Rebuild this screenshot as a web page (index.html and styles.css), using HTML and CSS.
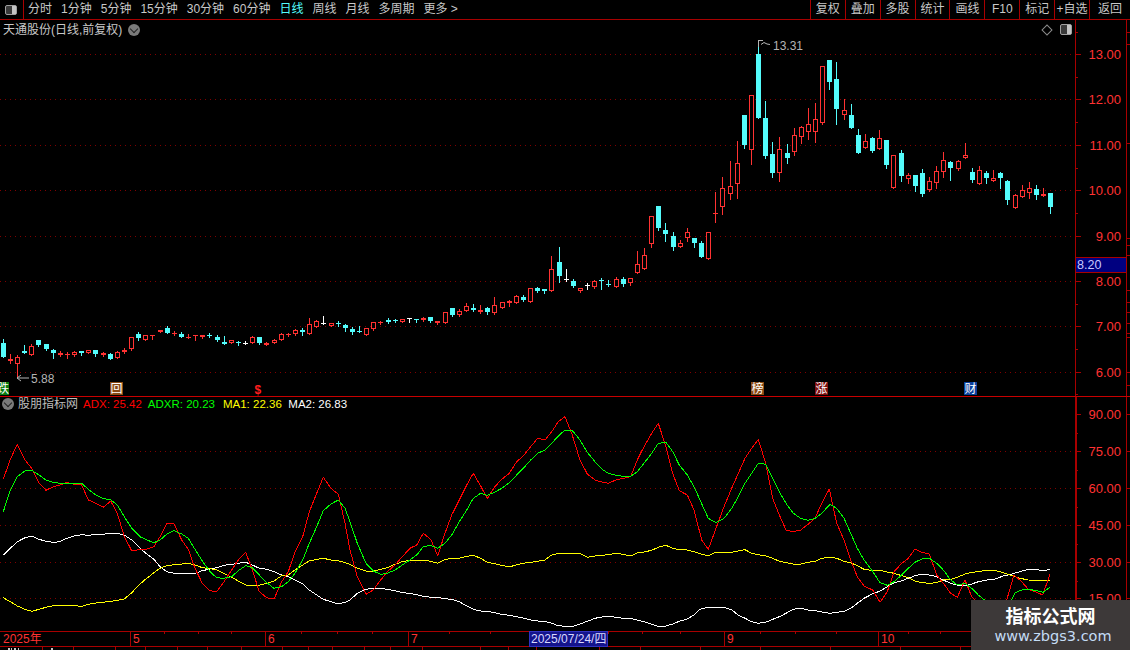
FILE: index.html
```html
<!DOCTYPE html>
<html lang="zh-CN">
<head>
<meta charset="utf-8">
<title>天通股份 日线</title>
<link rel="stylesheet" href="styles.css">
</head>
<body>
<div class="app">
  <header class="toolbar">
    <div class="toggle-cell"><span class="panel-icon"><i></i></span></div>
    <nav class="periods">
      <span>分时</span><span>1分钟</span><span>5分钟</span><span>15分钟</span><span>30分钟</span><span>60分钟</span>
      <span class="active">日线</span><span>周线</span><span>月线</span><span>多周期</span><span>更多 &gt;</span>
    </nav>
    <div class="actions">
      <span>复权</span><span>叠加</span><span>多股</span><span>统计</span><span>画线</span><span>F10</span><span>标记</span><span>+自选</span><span>返回</span>
    </div>
  </header>

  <section class="pane pane-main">
    <div class="plot">
      <svg id="price" class="canvas" width="1075" height="376" viewBox="0 20 1075 376"></svg>
      <div class="caption caption-main">
        <span class="stock-name">天通股份(日线,前复权)</span>
        <span class="round-btn"><i></i></span>
      </div>
      <div class="corner-tools">
        <span class="diamond"></span>
        <span class="panel-icon panel-icon-tall"><i></i></span>
      </div>
    </div>
    <svg id="priceAxis" class="axis" width="52" height="376" viewBox="1075 20 52 376"></svg>
    <svg id="priceStrip" class="strip" width="3" height="376" viewBox="1127 20 3 376"></svg>
  </section>

  <section class="pane pane-ind">
    <div class="plot">
      <svg id="indicator" class="canvas" width="1075" height="234" viewBox="0 397 1075 234"></svg>
      <div class="caption caption-ind">
        <span class="round-btn"><i></i></span>
        <span class="ind-name">股朋指标网</span>
        <span class="v-adx">ADX: 25.42</span>
        <span class="v-adxr">ADXR: 20.23</span>
        <span class="v-ma1">MA1: 22.36</span>
        <span class="v-ma2">MA2: 26.83</span>
      </div>
    </div>
    <svg id="indAxis" class="axis" width="52" height="234" viewBox="1075 397 52 234"></svg>
    <svg id="indStrip" class="strip" width="3" height="234" viewBox="1127 397 3 234"></svg>
  </section>

  <svg id="timeAxis" class="time-axis" width="1130" height="19" viewBox="0 631 1130 19"></svg>

  <aside class="watermark">
    <strong>指标公式网</strong>
    <span>www.zbgs3.com</span>
  </aside>
</div>
<script src="chart.js"></script>
</body>
</html>
```
FILE: styles.css
```css
* { box-sizing: border-box; }
html, body { margin: 0; padding: 0; background: #000; }
body { font-family: "Liberation Sans", "Noto Sans CJK SC", sans-serif; }
.app {
  position: relative;
  width: 1130px;
  height: 650px;
  overflow: hidden;
  background: #000;
  display: flex;
  flex-direction: column;
  color: #c8c8c8;
}

/* toolbar */
.toolbar {
  flex: none;
  height: 20px;
  display: flex;
  align-items: stretch;
  border-bottom: 1px solid #a80000;
  font-size: 12px;
  line-height: 19px;
}
.toggle-cell {
  width: 24px;
  border-right: 1px solid #a80000;
  display: flex;
  align-items: center;
  justify-content: center;
  padding-right: 1px;
}
.panel-icon {
  display: block;
  width: 12px;
  height: 10px;
  border: 1px solid #a0a0a0;
  border-radius: 2px;
  background: #3a3a3a;
  position: relative;
}
.panel-icon-tall { height: 11px; }
.panel-icon i {
  display: block;
  width: 4px;
  height: 100%;
  margin-left: 6px;
  background: #c4c4c4;
}
.periods {
  flex: 1;
  display: flex;
  gap: 9px;
  padding-left: 4px;
}
.periods span { white-space: nowrap; }
.periods .active { color: #54fcfc; }
.actions { display: flex; }
.actions span {
  width: 34.9px;
  text-align: center;
  border-left: 1px solid #a80000;
  white-space: nowrap;
}
.actions span:last-child { width: 41px; }

/* panes */
.pane { flex: none; display: flex; }
.pane-main { height: 377px; border-bottom: 1px solid #c80000; }
.pane-ind { height: 234px; }
.plot { position: relative; width: 1075px; flex: none; }
.canvas, .axis, .strip { display: block; flex: none; }
.caption {
  position: absolute;
  display: flex;
  align-items: center;
  font-size: 12px;
  line-height: 14px;
  white-space: nowrap;
}
.caption-main { left: 3px; top: 3px; gap: 6px; }
.caption-ind { left: 2px; top: 0; }
.round-btn {
  display: block;
  width: 12px;
  height: 12px;
  border-radius: 50%;
  background: #7a7a7a;
  position: relative;
}
.round-btn i {
  position: absolute;
  left: 3px;
  top: 2px;
  width: 6px;
  height: 6px;
  border-right: 1.5px solid #222;
  border-bottom: 1.5px solid #222;
  transform: rotate(45deg);
}
.corner-tools {
  position: absolute;
  right: 3px;
  top: 4px;
  display: flex;
  align-items: center;
  gap: 9px;
}
.diamond {
  display: block;
  width: 8px;
  height: 8px;
  border: 1px solid #8c8c8c;
  transform: rotate(45deg);
}
.ind-name { margin-left: 4px; color: #bdbdbd; }
.v-adx, .v-adxr, .v-ma1, .v-ma2 { font-size: 11.5px; }
.v-adx { margin-left: 5px; color: #ff0000; }
.v-adxr { margin-left: 6px; color: #00ff00; }
.v-ma1 { margin-left: 8px; color: #ffff00; }
.v-ma2 { margin-left: 6.5px; color: #ffffff; }

.time-axis { display: block; flex: none; }

/* svg contents */
svg text { font-family: "Liberation Sans", "Noto Sans CJK SC", sans-serif; }
.grid { stroke: #800000; stroke-width: 1; stroke-dasharray: 1 4; fill: none; shape-rendering: crispEdges; }
.wick-r { stroke: #ff3232; shape-rendering: crispEdges; stroke-width: 1; }
.wick-c { stroke: #54fcfc; shape-rendering: crispEdges; stroke-width: 1; }
.wick-w { stroke: #ffffff; shape-rendering: crispEdges; stroke-width: 1; }
.body-r { fill: #000; stroke: #ff3232; stroke-width: 1; shape-rendering: crispEdges; }
.body-rs { fill: #ff3232; shape-rendering: crispEdges; }
.body-c { fill: #54fcfc; shape-rendering: crispEdges; }
.body-w { fill: #ffffff; shape-rendering: crispEdges; }
.line { fill: none; stroke-width: 1; shape-rendering: crispEdges; stroke-linejoin: round; }
.l-red { stroke: #ff0000; }
.l-green { stroke: #00ff00; }
.l-yellow { stroke: #ffff00; }
.l-white { stroke: #ffffff; }
.note { fill: #b4b4b4; font-size: 12px; }
.note-mark { fill: none; stroke: #b4b4b4; stroke-width: 1; }
.axis-line { stroke: #a80000; stroke-width: 1; shape-rendering: crispEdges; }
.axis-line-wide { stroke: #a80000; stroke-width: 2; shape-rendering: crispEdges; }
.axis-label { fill: #ff3232; font-size: 13px; }
.last-box { fill: #000080; stroke: #a80000; stroke-width: 1; shape-rendering: crispEdges; }
.last-text { fill: #c8c8ff; font-size: 12.5px; }
.tag-text { fill: #fff; font-size: 12px; }
.tag-dollar { fill: #ff1e1e; font-size: 12px; font-weight: bold; }
.tag-green { fill: #0a7d10; }
.tag-brown { fill: #8a4a14; }
.tag-red { fill: #7d1010; }
.tag-blue { fill: #0a3f9c; }
.time-label { fill: #ff3232; font-size: 12px; }
.date-box { fill: #14148c; stroke: #3030c0; shape-rendering: crispEdges; }
.date-text { fill: #d8d8ff; font-size: 12px; }
.tab-bit { fill: #c8c8c8; }

/* watermark */
.watermark {
  position: absolute;
  left: 971px;
  top: 600px;
  width: 159px;
  height: 50px;
  background: #3d3939;
  display: flex;
  flex-direction: column;
  align-items: center;
  padding-top: 5px;
}
.watermark strong {
  font-family: "Noto Sans CJK SC", sans-serif;
  font-size: 18px;
  line-height: 21px;
  font-weight: 700;
  color: #fff;
}
.watermark span {
  margin-top: 1px;
  margin-left: 5px;
  font-family: "DejaVu Sans", sans-serif;
  font-size: 14.5px;
  line-height: 18px;
  color: #c4dcf5;
}
```
FILE: chart.js
```js
// Candles: type (r hollow red, c cyan, w white doji), high, body top, body bottom, low (y in page pixels)
var candles = [
['c',339,343,357,357],['r',354,359,361,363],['r',355,357,364,377],['c',345,351,353,353],['r',344,346,355,355],
['c',340,340,345,346],['c',344,344,349,350],['c',349,350,353,358],['r',351,353,355,356],['r',352,354,355,358],
['r',351,352,355,356],['c',351,351,353,355],['r',350,350,353,353],['c',350,350,354,356],['r',352,353,355,356],
['c',353,354,359,359],['r',351,352,358,358],['r',348,350,352,353],['r',337,337,349,350],['c',332,334,338,340],
['r',335,335,340,340],['r',335,335,336,339],['r',330,330,332,332],['c',326,328,333,333],['r',331,333,334,335],
['c',332,334,337,337],['r',334,337,338,338],['r',335,335,336,340],['r',335,335,337,338],['c',333,335,336,337],
['c',335,337,340,341],['c',336,342,344,344],['r',340,340,343,343],['c',341,342,343,345],['w',341,343,344,344],
['r',336,337,343,343],['c',337,337,343,344],['r',342,343,345,345],['r',339,340,343,343],['r',333,334,340,340],
['r',333,334,335,336],['r',329,330,334,335],['c',328,330,332,335],['r',318,324,334,334],['r',320,321,327,327],
['w',316,323,324,324],['r',323,323,326,326],['c',321,323,324,326],['c',324,325,328,331],['c',327,329,332,334],
['c',326,331,332,332],['r',328,328,335,335],['r',322,322,329,330],['r',321,322,323,324],['c',318,320,322,323],
['c',319,320,321,322],['r',319,319,322,322],['w',318,318,319,322],['c',319,319,320,322],['r',317,318,320,321],
['c',317,317,321,322],['r',321,321,323,324],['r',312,312,323,323],['c',308,308,315,316],['r',309,311,315,316],
['r',303,306,311,311],['c',304,308,310,311],['r',305,310,312,313],['c',307,308,312,314],['r',297,305,313,314],
['r',302,302,308,308],['r',300,301,303,306],['r',295,296,303,303],['c',295,297,300,301],['r',288,288,302,302],
['c',287,288,291,292],['c',289,289,291,293],['r',256,269,291,291],['c',247,262,276,282],['w',269,279,280,281],
['c',279,281,286,287],['r',288,288,291,292],['w',283,285,286,289],['r',280,281,287,288],['c',278,280,281,289],
['c',280,284,285,286],['r',277,279,287,287],['c',277,279,284,286],['r',278,278,283,285],['r',251,264,273,273],
['r',248,255,269,269],['r',216,216,244,247],['c',206,206,228,230],['c',223,230,234,241],['c',232,236,247,250],
['r',240,243,247,247],['r',228,232,238,241],['c',238,238,243,247],['c',241,243,257,257],['r',232,232,259,259],
['r',192,213,214,222],['r',177,188,207,214],['r',161,186,194,199],['r',141,163,184,198],['c',115,115,145,148],
['r',95,95,150,164],['c',40,54,118,118],['c',101,118,156,158],['c',142,154,173,177],['r',137,149,173,181],
['c',144,153,158,163],['r',128,135,152,155],['r',126,127,137,143],['r',108,124,132,139],['r',103,119,132,142],
['r',66,66,123,124],['c',60,60,82,89],['c',62,79,109,124],['r',99,110,115,119],['c',104,115,128,128],
['c',129,135,153,153],['r',134,141,148,148],['c',137,138,151,152],['r',130,138,149,149],['c',140,140,165,168],
['r',155,155,188,188],['c',150,153,176,181],['r',173,175,179,183],['c',175,175,186,191],['c',169,173,194,196],
['r',177,181,190,191],['r',166,171,183,188],['r',152,160,172,177],['c',161,162,168,180],['r',160,161,169,170],
['r',143,155,158,158],['c',168,172,180,182],['r',166,170,184,184],['c',171,173,178,183],['r',170,178,181,181],
['c',172,173,178,188],['c',180,181,200,204],['r',194,195,208,208],['r',185,190,197,197],['r',182,188,193,198],
['c',185,189,195,199],['r',188,194,196,196],['c',193,193,207,213]
];

// Indicator polylines: sampled by section, x offset then pairs of (x*3, (y-400)*3)
var series = {
  red: [
    [0,[10,238,31,178,52,133,75,180,95,205,117,248,138,271,160,260,180,255,200,247,222,253,245,255,265,300,288,310,310,322,332,303,352,340,373,410,395,452,420,449,440,447,462,440,480,410,500,371,522,371,545,420,565,448,585,505,607,550,630,572,650,575,672,545,695,510,715,480,737,457,757,510,778,575,800,593,822,597,845,545,865,515,885,455,908,410,928,335,950,280,970,232,993,265,1015,283,1035,370,1050,450]],
    [350,[22,530,48,583,70,570,92,540,112,515,135,495,157,470,180,445,200,435,220,400,242,418,263,467,285,400,305,345,328,300,350,255,370,220,392,258,412,296,433,262,455,238,478,220,500,185,520,168,542,140,563,115,585,120,605,95,625,65,645,50,665,100,690,180,712,222,735,240,755,246,775,250,797,240,820,235,842,230,862,180,882,140,905,100,925,70,948,140,968,220,988,272,1012,285,1032,330,1050,400]],
    [700,[5,420,25,448,48,385,72,320,95,265,115,220,135,175,155,145,175,118,197,190,218,295,238,345,258,390,280,395,302,390,322,375,345,355,365,310,388,267,410,370,432,420,452,480,472,530,492,558,518,570,540,607,562,575,582,515,605,490,625,475,645,447,665,457,688,462,710,525,730,550,752,580,772,592,795,540,815,590,835,610,860,640,920,600,942,525,965,545,985,568,1010,577,1028,585,1050,522]]
  ],
  green: [
    [0,[10,335,31,270,52,230,75,213,95,211,117,225,138,240,160,247,180,250,200,250,222,250,245,250,265,268,288,285,310,296,332,299,352,315,373,350,395,385,420,410,440,420,462,428,480,420,500,403,522,392,545,402,565,415,585,448,607,483,630,515,650,533,672,535,695,530,715,512,737,497,757,503,778,525,800,548,822,565,845,560,865,545,885,520,908,480,928,430,950,380,970,332,993,312,1015,300,1035,325,1050,365]],
    [350,[22,430,48,490,70,513,92,523,112,520,135,510,157,495,180,480,200,465,220,440,242,436,263,445,285,430,305,405,328,365,350,330,370,295,392,280,412,286,433,277,455,265,478,248,500,225,520,205,542,180,563,160,585,150,605,130,625,108,645,90,668,93,690,120,712,157,735,185,755,207,775,220,797,226,820,229,842,229,862,215,882,190,905,160,925,130,948,127,968,155,988,195,1012,225,1032,260,1050,300]],
    [700,[25,355,48,368,72,355,95,325,115,290,135,250,155,220,175,190,197,193,218,235,238,275,258,310,280,340,302,355,325,361,345,355,365,340,390,313,410,325,432,355,452,400,472,445,492,480,515,510,540,548,562,556,582,545,605,525,625,505,645,487,665,477,688,475,710,490,730,510,752,540,772,555,795,550,815,565,835,585,860,605,900,640,935,600,945,578,965,570,985,568,1010,572,1030,577,1050,561]]
  ],
  yellow: [
    [0,[10,593,31,605,52,618,75,628,95,634,117,628,138,622,160,617,180,617,200,617,222,617,245,619,265,613,288,609,310,607,332,604,352,601,373,597,395,578,420,552,440,535,462,518,480,505,500,497,522,494,545,492,565,490,585,495,607,503,630,506,650,510,672,520,695,532,715,543,737,555,757,556,778,556,800,550,822,543,845,527,865,525,885,510,908,495,928,483,950,478,970,475,993,480,1015,482,1035,488,1050,493]],
    [350,[22,505,48,513,70,513,92,508,112,503,135,493,157,485,180,481,200,481,220,481,242,484,263,490,285,479,305,475,328,475,350,469,370,466,392,475,412,487,433,491,455,496,478,501,500,494,520,490,542,487,563,484,585,480,605,465,625,460,645,460,668,460,690,460,712,472,735,468,755,466,775,464,797,460,820,463,842,468,862,459,882,456,905,451,925,442,948,436,968,445,988,449,1012,450,1032,455,1050,461]],
    [700,[25,467,48,457,72,457,95,457,115,453,135,449,155,460,175,464,197,468,218,475,238,484,258,488,280,492,302,492,325,487,345,484,365,475,390,472,410,475,432,484,452,488,472,497,492,508,515,511,540,511,562,516,582,520,605,527,625,533,645,543,665,548,688,550,710,548,730,540,752,538,772,532,795,522,815,517,835,515,860,511,885,511,910,518,935,527,960,535,985,540,1010,541,1030,541,1050,543]]
  ],
  white: [
    [0,[10,465,31,445,52,425,75,413,95,408,117,418,138,424,160,427,180,425,200,415,222,408,245,404,265,406,288,403,310,403,332,400,352,400,373,405,395,420,420,445,440,462,462,478,480,500,500,515,522,520,545,520,565,522,585,520,607,512,630,507,650,503,672,496,695,493,715,490,737,487,757,495,778,505,800,508,822,515,845,525,865,530,885,540,908,552,928,570,950,585,970,598,993,605,1015,612,1035,607,1050,600]],
    [350,[22,580,48,568,70,565,92,565,112,568,135,572,157,578,180,580,200,584,220,589,242,592,263,592,285,596,305,598,328,605,350,618,370,628,392,633,412,634,433,638,455,643,478,646,500,650,520,654,542,660,563,663,585,664,605,670,625,677,645,679,668,679,690,672,712,664,735,655,755,651,775,649,797,652,820,655,842,655,862,660,882,665,905,673,925,679,948,678,968,672,988,664,1012,657,1032,645,1050,628]],
    [700,[25,622,48,622,72,622,95,630,115,645,135,655,155,665,175,670,197,667,218,658,238,650,258,640,280,628,302,625,325,630,345,632,365,636,390,640,410,637,432,634,452,625,472,610,492,595,515,583,540,573,562,560,582,549,605,542,625,535,645,527,665,523,688,525,710,530,730,540,752,550,772,555,795,558,815,552,835,545,860,540,885,537,910,528,935,522,960,515,985,508,1010,508,1030,513,1050,507]]
  ]
};

var AXIS_X = 1075.5, AXIS_R = 1126.5;

function hLine(cls, x1, x2, y) {
  return '<line class="' + cls + '" x1="' + x1 + '" x2="' + x2 + '" y1="' + y + '" y2="' + y + '"/>';
}
function vLine(cls, x, y1, y2) {
  return '<line class="' + cls + '" x1="' + x + '" x2="' + x + '" y1="' + y1 + '" y2="' + y2 + '"/>';
}
function text(cls, x, y, str, anchor) {
  return '<text class="' + cls + '" x="' + x + '" y="' + y + '"' + (anchor ? ' text-anchor="' + anchor + '"' : '') + '>' + str + '</text>';
}

function drawPrice() {
  var out = '';
  [54, 99, 145, 190, 236, 281, 326, 372].forEach(function (y) {
    out += hLine('grid', 0, 1075, y + 0.5);
  });
  candles.forEach(function (d, i) {
    var cx = Math.floor(3.3 + 7.125 * i), type = d[0], hi = d[1], top = d[2], bot = d[3], lo = d[4];
    out += vLine('wick-' + type, cx + 0.5, hi, lo + 1);
    if (bot - top <= 2) {
      out += '<rect class="body-' + (type === 'r' ? 'rs' : type) + '" x="' + (cx - 2) + '" y="' + top + '" width="5" height="' + Math.max(1, bot - top) + '"/>';
    } else if (type === 'r') {
      out += '<rect class="body-r" x="' + (cx - 1.5) + '" y="' + (top + 0.5) + '" width="4" height="' + (bot - top - 1) + '"/>';
    } else {
      out += '<rect class="body-' + type + '" x="' + (cx - 2) + '" y="' + top + '" width="5" height="' + (bot - top) + '"/>';
    }
  });
  // high and low notes
  out += '<path class="note-mark" d="M758.5 40V47M758.5 40.5H763M761 44.5L764 42.5L767 44L770 44.5"/>' + text('note', 773, 50, '13.31');
  out += '<path class="note-mark" d="M17 378H29M17 378L21 375M17 378L21 381"/>' + text('note', 31, 383, '5.88');
  // event tags
  out += '<rect class="tag-green" x="0" y="382" width="9" height="13"/>' + text('tag-text', -3, 392.5, '跌');
  out += '<rect class="tag-brown" x="110" y="382" width="13" height="13"/>' + text('tag-text', 110.5, 392.5, '回');
  out += text('tag-dollar', 254.5, 394, '$');
  out += '<rect class="tag-brown" x="751" y="382" width="13" height="13"/>' + text('tag-text', 751.5, 392.5, '榜');
  out += '<rect class="tag-red" x="815" y="382" width="13" height="13"/>' + text('tag-text', 815.5, 392.5, '涨');
  out += '<rect class="tag-blue" x="964" y="382" width="13" height="13"/>' + text('tag-text', 964.5, 392.5, '财');
  document.getElementById('price').innerHTML = out;
}

function drawIndicator() {
  var out = '';
  [451, 488, 525, 562, 598].forEach(function (y) {
    out += hLine('grid', 0, 1075, y + 0.5);
  });
  [['white', 'l-white'], ['yellow', 'l-yellow'], ['red', 'l-red'], ['green', 'l-green']].forEach(function (s) {
    var pts = [];
    series[s[0]].forEach(function (section) {
      var off = section[0], arr = section[1];
      for (var k = 0; k < arr.length; k += 2) {
        pts.push((off + arr[k] / 3).toFixed(1) + ',' + (400 + arr[k + 1] / 3).toFixed(1));
      }
    });
    out += '<polyline class="line ' + s[1] + '" points="' + pts.join(' ') + '"/>';
  });
  document.getElementById('indicator').innerHTML = out;
}

function drawAxis(top, bottom, labels, minors, wide) {
  var out = vLine(wide ? 'axis-line-wide' : 'axis-line', wide ? 1076 : AXIS_X, top, bottom) + vLine('axis-line', AXIS_R, top, bottom);
  labels.forEach(function (l) {
    out += hLine('axis-line', 1075, 1081, l[0] + 0.5) + text('axis-label', 1121, l[0] + 5, l[1], 'end');
  });
  minors.forEach(function (y) { out += hLine('axis-line', 1075, 1078, y + 0.5); });
  return out;
}

function drawAxes() {
  var main = drawAxis(20, 396,
    [[54, '13.00'], [99, '12.00'], [145, '11.00'], [190, '10.00'], [236, '9.00'], [281, '8.00'], [326, '7.00'], [372, '6.00']],
    [32, 77, 122, 168, 213, 304, 349, 394], false);
  main += '<rect class="last-box" x="1075.5" y="257.5" width="51" height="15"/>' + text('last-text', 1077, 269, '8.20');
  document.getElementById('priceAxis').innerHTML = main;

  document.getElementById('indAxis').innerHTML = drawAxis(397, 631,
    [[414, '90.00'], [451, '75.00'], [488, '60.00'], [525, '45.00'], [562, '30.00'], [598, '15.00']],
    [433, 470, 507, 544, 581, 617], true);

  var strip = '';
  [32, 44, 143, 238, 245, 255, 290, 302, 312, 323, 333, 337, 372, 385].forEach(function (y) {
    strip += hLine('axis-line', 1127, 1130, y + 0.5);
  });
  document.getElementById('priceStrip').innerHTML = strip;
  var strip2 = '';
  [414, 451, 488, 525, 562, 598].forEach(function (y) { strip2 += hLine('axis-line', 1127, 1130, y + 0.5); });
  document.getElementById('indStrip').innerHTML = strip2;
}

function drawTime() {
  var out = hLine('axis-line', 0, 1130, 631.5) + hLine('axis-line', 0, 1130, 646.5);
  [[130, '5'], [265, '6'], [408, '7'], [724, '9'], [878, '10']].forEach(function (m) {
    out += vLine('axis-line', m[0] + 0.5, 631, 646);
    out += text('time-label', m[0] + 3, 643, m[1]);
  });
  out += text('time-label', 3, 643, '2025年');
  [164, 198, 231, 301, 337, 372, 449, 490, 608, 642, 680, 760, 795, 836, 908, 940, 1010].forEach(function (x) {
    out += vLine('axis-line', x + 0.5, 631, 634);
  });
  out += '<rect class="date-box" x="529.5" y="631.5" width="78" height="15"/>' + text('date-text', 531, 643, '2025/07/24/四');
  [42, 73, 115, 145, 177, 207, 241, 282, 308, 332, 364, 390, 422, 480, 508, 536, 599, 640, 700, 760, 830, 900, 960].forEach(function (x) {
    out += vLine('axis-line', x + 0.5, 647, 650);
  });
  [[8, 2], [11, 1], [14, 2], [18, 1], [51, 2]].forEach(function (b) {
    out += '<rect class="tab-bit" x="' + b[0] + '" y="648" width="' + b[1] + '" height="2"/>';
  });
  document.getElementById('timeAxis').innerHTML = out;
}

drawPrice();
drawIndicator();
drawAxes();
drawTime();
```
